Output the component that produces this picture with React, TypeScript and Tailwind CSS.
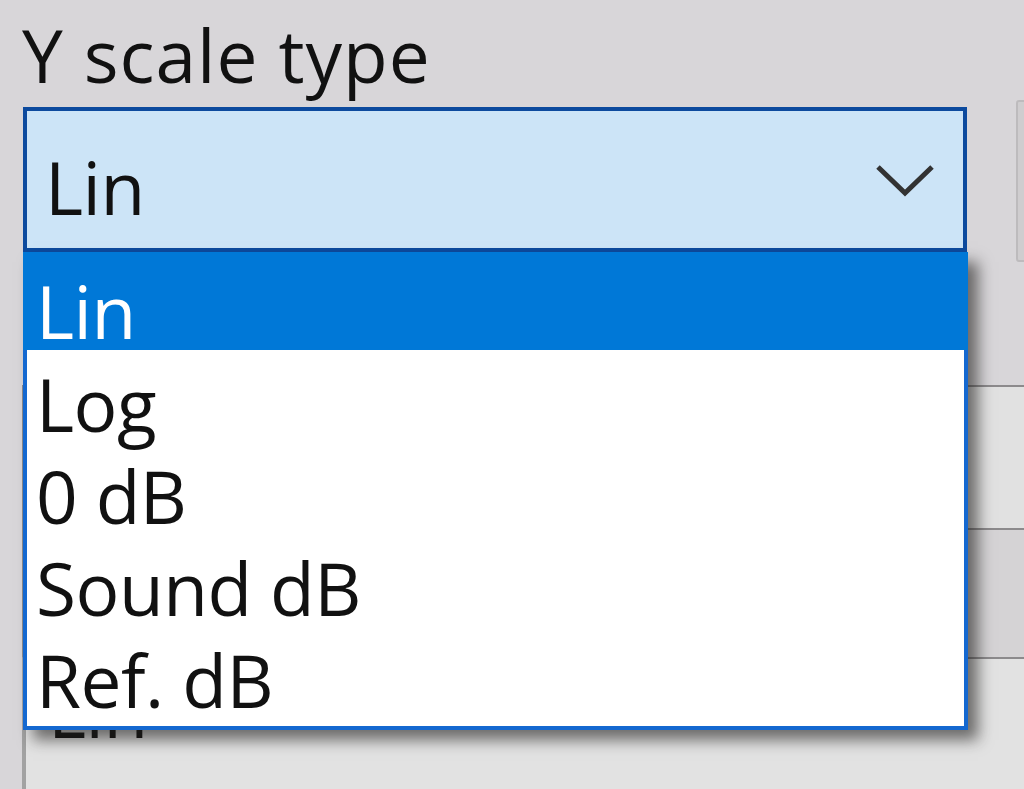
import { useState } from "react";

const OPTIONS = ["Lin", "Log", "0 dB", "Sound dB", "Ref. dB"];

const FONT = "font-['Open_Sans','Noto_Sans',sans-serif]";

function Chevron(): React.JSX.Element {
  return (
    <svg width="60" height="36" viewBox="0 0 60 36" className="shrink-0">
      <path
        d="M3 4 L30 30 L57 4"
        fill="none"
        stroke="#333"
        strokeWidth="5"
        strokeLinejoin="miter"
      />
    </svg>
  );
}

/** Combo box with its option list open. */
function ScaleCombo({
  value,
  onPick,
}: {
  value: string;
  onPick: (v: string) => void;
}): React.JSX.Element {
  return (
    <div className="relative w-[944px] shrink-0">
      <div className="flex h-[145px] items-start border-4 border-[#0c4a9e] bg-[#cce4f7]">
        <span className="pl-[18px] pt-[12px] text-[73px] leading-[127px] tracking-[-0.5px] text-[#111]">
          {value}
        </span>
        <div className="ml-auto mr-[28px] mt-[52px]">
          <Chevron />
        </div>
      </div>
      <ul className="absolute left-0 top-[145px] z-10 w-[945px] border-4 border-t-0 border-[#1468d0] bg-white pb-[8px] shadow-[10px_10px_14px_rgba(30,28,26,0.6)]">
        {OPTIONS.map((opt, i) => (
          <li
            key={opt}
            onClick={() => onPick(opt)}
            className={
              i === 0
                ? "-mx-[4px] h-[98px] bg-[#0078d7] pl-[13px] pt-[17px] text-[73px] leading-[84px] tracking-[-0.5px] text-white"
                : "h-[92px] pl-[9px] pt-[12px] text-[73px] leading-[84px] tracking-[-0.5px] text-[#111]"
            }
          >
            {opt}
          </li>
        ))}
      </ul>
    </div>
  );
}

export default function App(): React.JSX.Element {
  const [value, setValue] = useState("Lin");

  return (
    <div
      className={`${FONT} h-[789px] w-[1024px] overflow-hidden bg-[#d8d6d9]`}
    >
      <div className="pl-[22px] pt-[18px] text-[73px] leading-[73px] tracking-[1px] text-[#111]">
        Y scale type
      </div>

      <div className="mt-[9px] flex items-start pl-[23px]">
        <div className="mt-[7px]">
          <ScaleCombo value={value} onPick={setValue} />
        </div>
        <div className="ml-[49px] h-[162px] w-[60px] shrink-0 rounded-[3px] border-2 border-[#bdbbbd] bg-[#cfcdcf]" />
      </div>

      {/* controls behind the open list */}
      <div className="mt-[123px] ml-[22px] flex flex-col">
        <div className="h-[143px] border-l-4 border-t-2 border-[#8c8a8c] bg-[#e1e1e1]" />
        <div className="h-[129px] border-l-4 border-t-2 border-[#8c8a8c] bg-[#d5d3d5]" />
        <div className="h-[145px] border-l-4 border-t-2 border-[#a2a2a2] border-t-[#8c8a8c] bg-[#e2e2e2] pl-[22px] pt-[9px] text-[73px] leading-[84px] tracking-[-0.5px] text-[#111]">
          Lin
        </div>
      </div>
    </div>
  );
}
